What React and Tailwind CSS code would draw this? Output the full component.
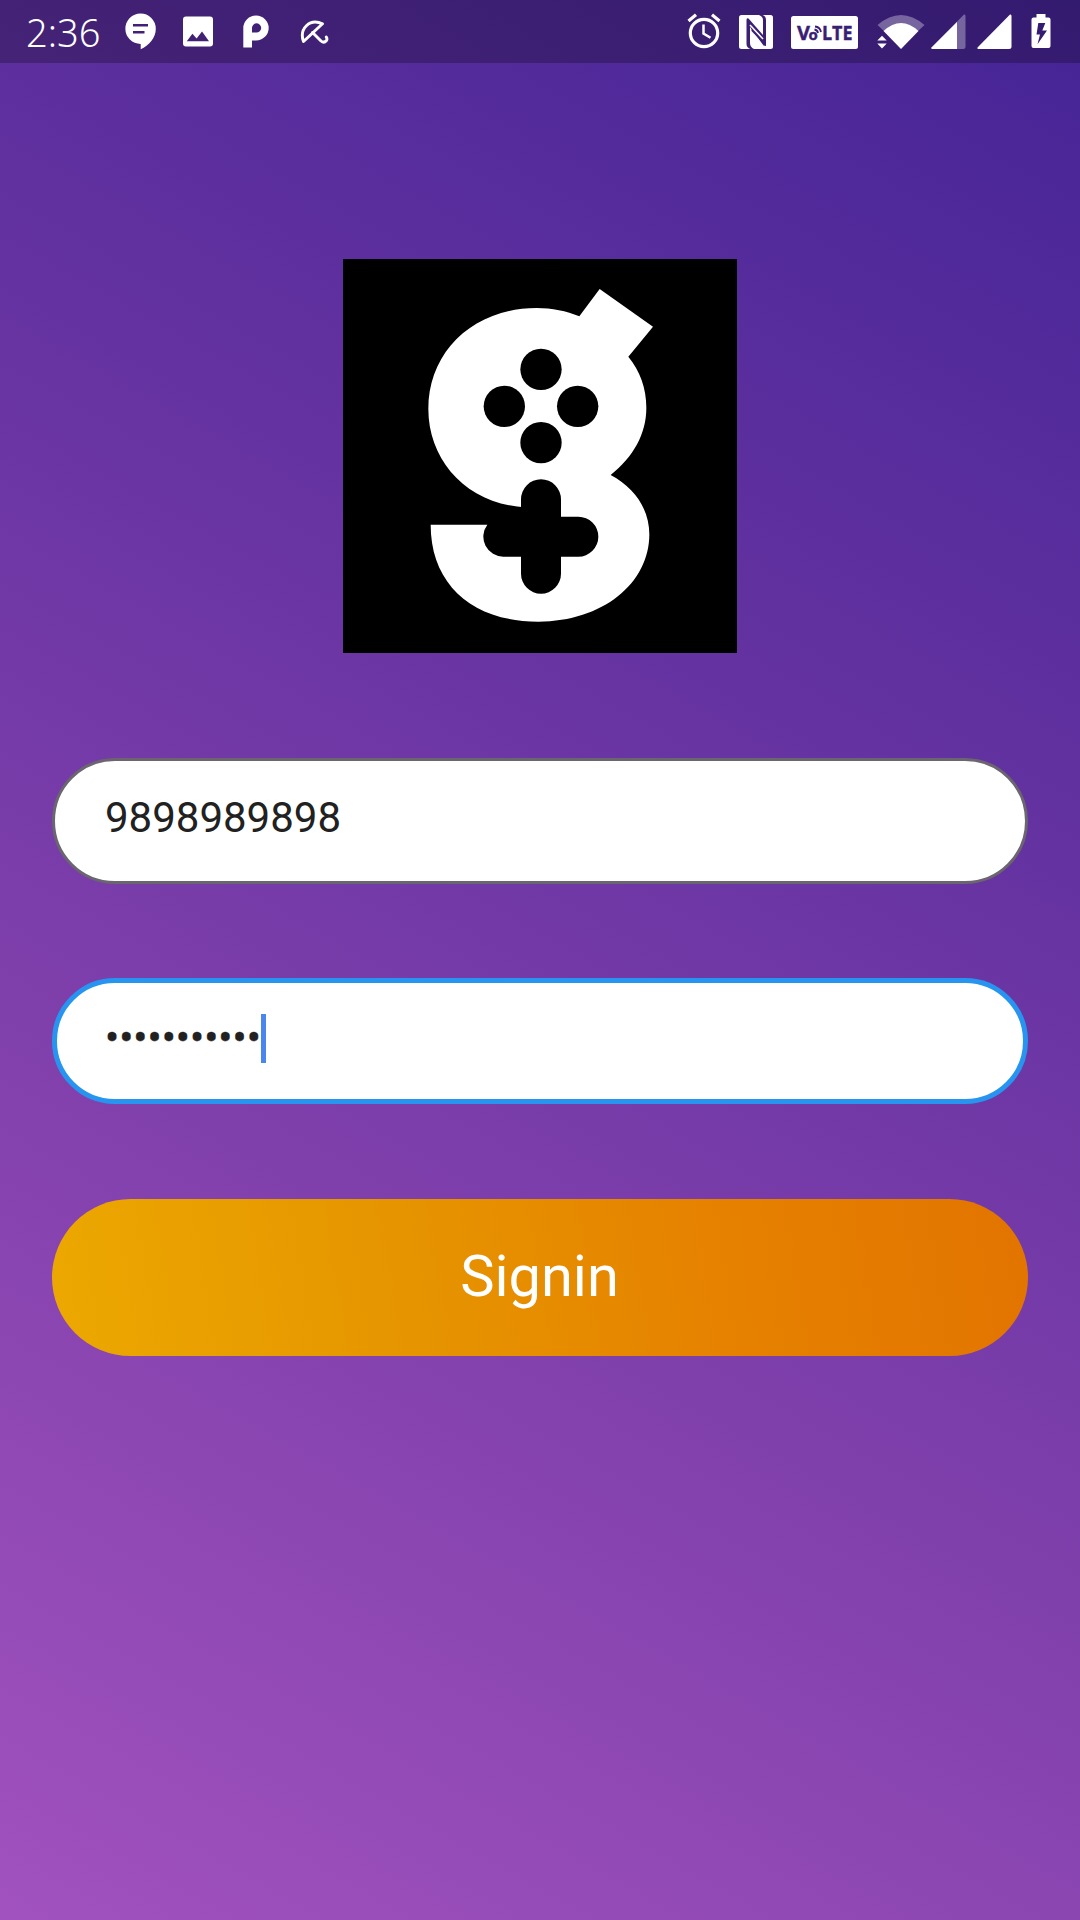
const Svg = ({ w, h, className = "", children }) => (
  <svg width={w} height={h} viewBox={`0 0 ${w} ${h}`} className={`shrink-0 ${className}`} fill="white">
    {children}
  </svg>
);

const ChatIcon = () => (
  <Svg w={32} h={38}>
    <path fillRule="evenodd" d="M15.500 1.500a15.200 15.200 0 0 1 15.300 15.200C30.800 26 24 33.500 15.700 37.300V32A15.250 15.250 0 0 1 15.500 1.500ZM8 12v2.400H23V12ZM8 19v2.400H19.500V19Z" />
  </Svg>
);

const ImageIcon = () => (
  <Svg w={30} h={31}>
    <path fillRule="evenodd" d="M3 .500H27a3 3 0 0 1 3 3V27.500a3 3 0 0 1-3 3H3a3 3 0 0 1-3-3V3.500a3 3 0 0 1 3-3ZM3.800 25.300H26L19 15.500 13.600 22.600 9.400 17.800Z" />
  </Svg>
);

const PIcon = () => (
  <Svg w={26} h={33}>
    <path fillRule="evenodd" d="M.300 32.500V13A12.700 12.500 0 1 1 13 25.500H9V32.500ZM9 17.500H13A4.600 4.600 0 1 0 9 13Z" />
  </Svg>
);

const UmbrellaIcon = () => (
  <Svg w={30} h={26}>
    <g fill="none" stroke="white" strokeWidth="2.900" strokeLinecap="round" strokeLinejoin="round">
      <path d="M3.500 22.500C-1 10 9.500-1 22.500 4.800Z" />
      <path d="M12.500 13.500L21 22Q24 24.500 26.500 21.500 27.500 20 26.300 18" />
    </g>
  </Svg>
);

const AlarmIcon = () => (
  <Svg w={34} h={36}>
    <g fill="none" stroke="white" strokeWidth="3.200">
      <circle cx="17" cy="20" r="13.700" />
      <path d="M1.500 8L9 1.700M25 1.700L32.500 8" />
      <path d="M16.500 11.500V20.500L23.500 24.800" strokeWidth="2.500" />
    </g>
  </Svg>
);

const NfcIcon = () => (
  <Svg w={34} h={34}>
    <rect width="34" height="34" rx="2.500" />
    <g fill="#3b1f73">
      <path d="M7.500 5Q7.500 2.500 9.500 3.500L24 20V5Q24 1.500 20 0H23.500Q27 1 27 5V31L24.500 30.500 11 12V28Q11 32 15 34H11.500Q7.500 32.500 7.500 29Z" />
      <path d="M12.500 12.500L22.500 22V26.500L12.500 16Z" />
    </g>
    <path d="M11 10L24 24" fill="none" stroke="white" strokeWidth="1.600" />
  </Svg>
);

const VolteIcon = () => (
  <Svg w={67} h={33}>
    <rect width="67" height="33" rx="2.500" />
    <g fill="#3a1e74" stroke="#3a1e74" strokeWidth=".4" fontFamily="Open Sans, sans-serif" fontWeight="700">
      <text x="6" y="23.500" fontSize="19" textLength="13" lengthAdjust="spacingAndGlyphs">V</text>
      <text x="17.500" y="23.500" fontSize="15">o</text>
      <text x="31" y="23.500" fontSize="19" textLength="30.500" lengthAdjust="spacingAndGlyphs">LTE</text>
    </g>
    <path d="M23.500 13.500Q26.500 14 27 17M24 10.500Q29 11 30 16" fill="none" stroke="#3a1e74" strokeWidth="1.800" />
  </Svg>
);

const WifiIcon = () => (
  <Svg w={48} h={36}>
    <path d="M.500 11Q24-9 47.500 11L41 17Q24 2 7 17Z" opacity=".32" />
    <path d="M6.500 17Q24 1 41.500 17L24 35Z" />
    <path d="M.300 26.500L5 21.700 9.700 26.500ZM.300 29.500H9.700L5 34.500Z" />
  </Svg>
);

const SignalIcon = ({ partial }) => (
  <Svg w={35} h={35}>
    <path d="M33 .500Q34.500 0 34.500 2V32.500Q34.500 35 32 35H1Q0 34.500.500 33.500Z" opacity={partial ? ".32" : "1"} />
    {partial && <path d="M26 8V35H1Q0 34.500.500 33.500Z" />}
  </Svg>
);

const BatteryIcon = () => (
  <Svg w={20} h={34}>
    <path fillRule="evenodd" d="M5.500 0H14.500V3.500H17.500Q19.500 3.500 19.500 5.500V32Q19.500 34 17.500 34H2.500Q.500 34 .500 32V5.500Q.500 3.500 2.500 3.500H5.500ZM7.300 9L5.500 20.500H9L6.500 30.300 16 16.500H11.300L14.300 9Z" />
  </Svg>
);

const StatusBar = () => (
  <header className="flex h-[63px] items-start bg-black/25 text-white">
    <span className="ml-[26px] mt-[7px] w-[76px] font-['Noto_Sans'] text-[38px] font-[360] leading-[51px]">2:36</span>
    <div className="ml-[22.500px] mt-[12px]"><ChatIcon /></div>
    <div className="ml-[26.500px] mt-[16px]"><ImageIcon /></div>
    <div className="ml-[30px] mt-[15px]"><PIcon /></div>
    <div className="ml-[31px] mt-[19px]"><UmbrellaIcon /></div>
    <div className="ml-auto mt-[13px]"><AlarmIcon /></div>
    <div className="ml-[17.500px] mt-[14.500px]"><NfcIcon /></div>
    <div className="ml-[18.500px] mt-[16px]"><VolteIcon /></div>
    <div className="ml-[19px] mt-[14px]"><WifiIcon /></div>
    <div className="ml-[6px] mt-[14px]"><SignalIcon partial /></div>
    <div className="ml-[11px] mt-[14px]"><SignalIcon /></div>
    <div className="ml-[19px] mr-[29px] mt-[14px]"><BatteryIcon /></div>
  </header>
);

const Logo = () => (
  <svg width="394" height="394" viewBox="9 12 1182 1182" className="mx-auto mt-[196px] block bg-black">
    <path fill="white" d="M718 184L779 102 939 215 865 305C900 347 919 400 919 458C919 537 880 605 812 660C884 698 928 763 928 838C928 985 788 1100 595 1100C400 1100 272 990 272 809H560V757C385 750 265 620 265 462C265 288 402 159 590 159C636 159 679 168 718 184Z" />
    <circle cx="603" cy="343" r="62" />
    <circle cx="493" cy="454" r="62" />
    <circle cx="713" cy="454" r="62" />
    <circle cx="603" cy="563" r="62" />
    <path d="M543 733A60 60 0 0 1 663 733V785H715A60 60 0 0 1 715 905H663V956A60 60 0 0 1 543 956V905H491A60 60 0 0 1 442 809V790H543Z" />
  </svg>
);

export default function App() {
  return (
    <div className="h-[1920px] w-[1080px] overflow-hidden bg-[linear-gradient(209.36deg,#452496_0%,#5d2f9e_26.5%,#8040ac_64%,#a152be_100%)]">
      <StatusBar />
      <Logo />
      <main className="mx-[52.400px] flex flex-col">
        <div className="mt-[105px] flex h-[126px] items-start rounded-full border-[3px] border-[#6b6570] bg-white pl-[49.600px] font-['Roboto'] text-[42px] leading-[49px] text-[#212121]">
          <span className="mt-[32px]">9898989898</span>
        </div>
        <div className="mt-[94px] flex h-[126px] items-start rounded-full border-[5px] border-[#2795f0] bg-white pl-[47.600px] font-['Roboto'] text-[42px] leading-[49px] text-[#212121]">
          <span className="mt-[30px] [-webkit-text-stroke:0.4px_#212121]">•••••••••••</span>
          <span className="ml-[.5px] mt-[31px] h-[49px] w-[5px] bg-[#4b86ee]" />
        </div>
        <button className="mt-[95px] flex h-[157px] items-start justify-center rounded-full bg-[linear-gradient(260.85deg,#e27400_0%,#e68200_33%,#e69600_66%,#eca800_100%)] font-['Roboto'] text-[57.750px] leading-[67px] text-white">
          <span className="-ml-px mt-[44px]">Signin</span>
        </button>
      </main>
    </div>
  );
}
